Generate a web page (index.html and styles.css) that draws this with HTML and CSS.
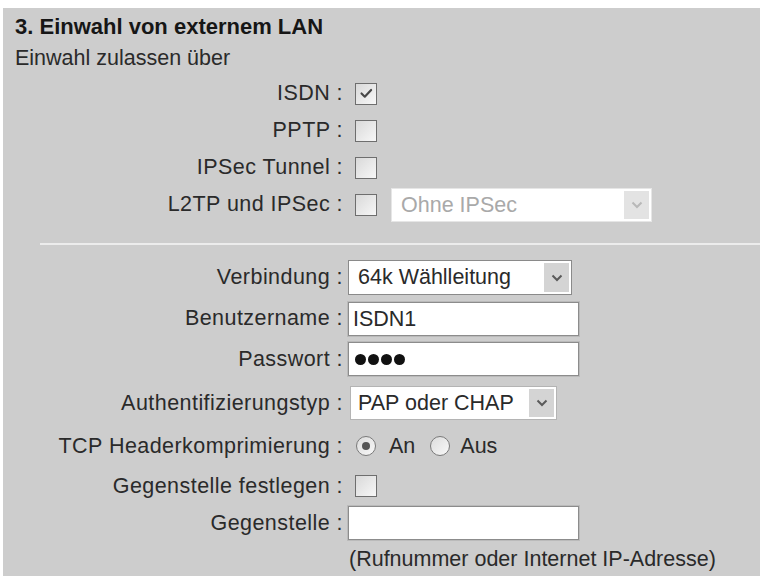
FILE: index.html
```html
<!DOCTYPE html>
<html lang="de">
<head>
<meta charset="utf-8">
<title>Einwahl von externem LAN</title>
<link rel="stylesheet" href="styles.css">
</head>
<body>
<div class="panel">
  <h1 class="title">3. Einwahl von externem LAN</h1>
  <p class="intro">Einwahl zulassen über</p>

  <div class="form">
    <div class="row">
      <span class="label">ISDN :</span>
      <span class="check checked"><svg viewBox="0 0 21 21" width="19" height="19"><path d="M5 10.5 L8.6 14 L15.6 6.6" fill="none" stroke="#474747" stroke-width="2.4" stroke-linecap="round" stroke-linejoin="round"/></svg></span>
    </div>
    <div class="row">
      <span class="label">PPTP :</span>
      <span class="check"></span>
    </div>
    <div class="row">
      <span class="label">IPSec Tunnel :</span>
      <span class="check"></span>
    </div>
    <div class="row">
      <span class="label">L2TP und IPSec :</span>
      <span class="check"></span>
      <div class="select select-ipsec disabled">
        <span class="value">Ohne IPSec</span>
        <span class="arrow"><svg viewBox="0 0 12 8" width="12" height="8"><path d="M1.5 1.5 L6 6 L10.5 1.5" fill="none" stroke="currentColor" stroke-width="2"/></svg></span>
      </div>
    </div>
  </div>

  <hr class="divider">

  <div class="form form-conn">
    <div class="row">
      <span class="label">Verbindung :</span>
      <div class="select select-conn">
        <span class="value">64k Wählleitung</span>
        <span class="arrow"><svg viewBox="0 0 12 8" width="12" height="8"><path d="M1.5 1.5 L6 6 L10.5 1.5" fill="none" stroke="currentColor" stroke-width="2"/></svg></span>
      </div>
    </div>
    <div class="row">
      <span class="label">Benutzername :</span>
      <div class="field">ISDN1</div>
    </div>
    <div class="row row-pass">
      <span class="label">Passwort :</span>
      <div class="field field-pass"><i></i><i></i><i></i><i></i></div>
    </div>
    <div class="row row-auth">
      <span class="label">Authentifizierungstyp :</span>
      <div class="select select-auth">
        <span class="value">PAP oder CHAP</span>
        <span class="arrow"><svg viewBox="0 0 12 8" width="12" height="8"><path d="M1.5 1.5 L6 6 L10.5 1.5" fill="none" stroke="currentColor" stroke-width="2"/></svg></span>
      </div>
    </div>
    <div class="row row-tcp">
      <span class="label">TCP Headerkomprimierung :</span>
      <span class="radio checked"></span><span class="opt">An</span>
      <span class="radio"></span><span class="opt opt-last">Aus</span>
    </div>
    <div class="row row-peer-set">
      <span class="label">Gegenstelle festlegen :</span>
      <span class="check"></span>
    </div>
    <div class="row row-peer">
      <span class="label">Gegenstelle :</span>
      <div class="field"></div>
    </div>
    <p class="hint">(Rufnummer oder Internet IP-Adresse)</p>
  </div>
</div>
</body>
</html>
```

FILE: styles.css
```css
* {
  box-sizing: border-box;
}

html, body {
  margin: 0;
  background: #ffffff;
}

body {
  font-family: "Liberation Sans", Arial, sans-serif;
  font-size: 21.5px;
  color: #2a2a2a;
}

.panel {
  margin: 8px 0 0 3px;
  height: 568px;
  background: #cdcdcd;
  overflow: hidden;
}

.title {
  margin: 0;
  padding: 3px 0 0 12px;
  font-size: 22px;
  line-height: 31px;
  font-weight: bold;
  color: #161616;
}

.intro {
  margin: 0;
  padding-left: 12px;
  line-height: 33px;
}

.row {
  display: flex;
  align-items: center;
  height: 37px;
}

.form-conn .row {
  height: 41px;
}

.form-conn .row-pass {
  height: 40px;
}

.form-conn .row-auth {
  height: 48px;
}

.form-conn .row-tcp {
  height: 38px;
}

.form-conn .row-peer-set {
  height: 42px;
}

.form-conn .row-peer {
  height: 32px;
}

.label {
  flex: none;
  width: 340px;
  text-align: right;
  white-space: nowrap;
  letter-spacing: 0.45px;
}

/* checkbox */
.check {
  flex: none;
  width: 22px;
  height: 22px;
  margin-left: 12px;
  border: 1px solid #6e6e6e;
  background: linear-gradient(135deg, #d9d9d9, #f7f7f7);
  display: flex;
  align-items: center;
  justify-content: center;
}

/* radio */
.radio {
  flex: none;
  width: 20px;
  height: 20px;
  margin-left: 13px;
  border: 1px solid #7a7a7a;
  border-radius: 50%;
  background: linear-gradient(135deg, #dcdcdc, #f8f8f8);
  display: flex;
  align-items: center;
  justify-content: center;
}

.radio + .opt {
  margin-left: 13px;
}

.opt-last {
  margin-left: 10px !important;
}

.opt + .radio {
  margin-left: 15px;
}

.radio.checked::after {
  content: "";
  width: 8px;
  height: 8px;
  border-radius: 50%;
  background: #555555;
}

/* drop-down boxes */
.select {
  flex: none;
  display: flex;
  height: 35px;
  margin-left: 5px;
  padding: 2px;
  border: 1px solid #8a8a8a;
  background: #ffffff;
}

.select .value {
  flex: 1;
  min-width: 0;
  padding-left: 7px;
  line-height: 29px;
  white-space: nowrap;
  overflow: hidden;
}

.select .arrow {
  flex: none;
  width: 25px;
  display: flex;
  align-items: center;
  justify-content: center;
  background: #d4d4d4;
  color: #5a5a5a;
}

.select-conn {
  width: 224px;
}

.select-auth {
  width: 207px;
  margin-left: 7px;
  height: 34px;
  border-color: #b4b4b4;
}

.select-auth .value {
  padding-left: 5px;
}

.select-ipsec {
  width: 261px;
  height: 34px;
  margin-left: 14px;
}

.select.disabled {
  border-color: #e6e6e6;
}

.select.disabled .value {
  color: #a9a9a9;
}

.select.disabled .arrow {
  background: #e3e3e3;
  color: #b8b8b8;
}

/* text fields */
.field {
  flex: none;
  width: 231px;
  height: 34px;
  margin-left: 5px;
  padding-left: 4px;
  border: 1px solid #8c8c8c;
  box-shadow: 0 0 0 1px #bababa;
  background: #ffffff;
  line-height: 32px;
  white-space: nowrap;
}

.field-pass {
  display: flex;
  align-items: center;
  gap: 2px;
  padding-left: 6px;
}

.field-pass i {
  width: 11px;
  height: 11px;
  border-radius: 50%;
  background: #111111;
}

.divider {
  margin: 20px 0 12px 37px;
  height: 2px;
  border: 0;
  background: #ececec;
}

.hint {
  margin: 4px 0 0 346px;
  line-height: 32px;
  white-space: nowrap;
}
```
